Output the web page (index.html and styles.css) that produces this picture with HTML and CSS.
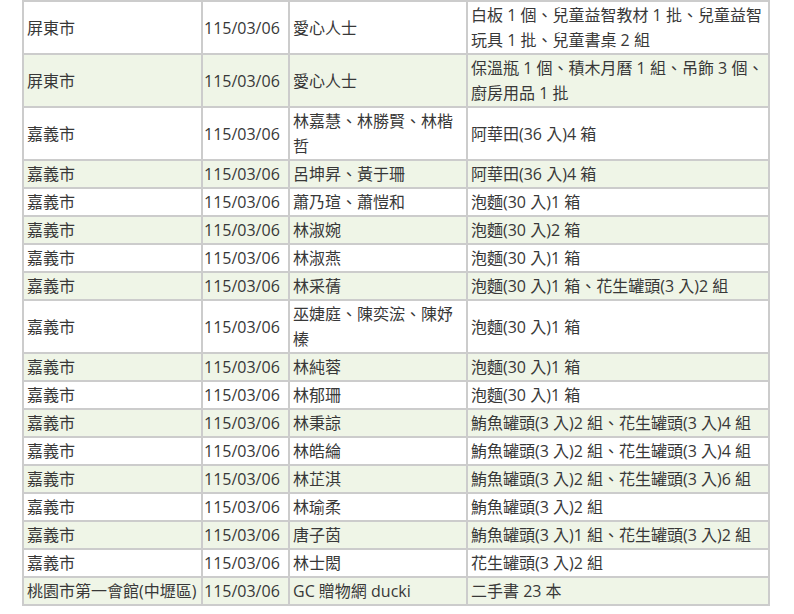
FILE: index.html
```html
<!DOCTYPE html>
<html lang="zh-Hant">
<head>
<meta charset="utf-8">
<title>捐贈明細</title>
<link rel="stylesheet" href="styles.css">
</head>
<body>
<table class="donations">
  <colgroup>
    <col class="c-area">
    <col class="c-date">
    <col class="c-donor">
    <col class="c-items">
  </colgroup>
  <tbody>
    <tr><td>屏東市</td><td>115/03/06</td><td>愛心人士</td><td>白板 1 個、兒童益智教材 1 批、兒童益智玩具 1 批、兒童書桌 2 組</td></tr>
    <tr><td>屏東市</td><td>115/03/06</td><td>愛心人士</td><td>保溫瓶 1 個、積木月曆 1 組、吊飾 3 個、廚房用品 1 批</td></tr>
    <tr><td>嘉義市</td><td>115/03/06</td><td class="names">林嘉慧、林勝賢、林楷哲</td><td>阿華田(36 入)4 箱</td></tr>
    <tr><td>嘉義市</td><td>115/03/06</td><td>呂坤昇、黃于珊</td><td>阿華田(36 入)4 箱</td></tr>
    <tr><td>嘉義市</td><td>115/03/06</td><td>蕭乃瑄、蕭愷和</td><td>泡麵(30 入)1 箱</td></tr>
    <tr><td>嘉義市</td><td>115/03/06</td><td>林淑婉</td><td>泡麵(30 入)2 箱</td></tr>
    <tr><td>嘉義市</td><td>115/03/06</td><td>林淑燕</td><td>泡麵(30 入)1 箱</td></tr>
    <tr><td>嘉義市</td><td>115/03/06</td><td>林采蒨</td><td>泡麵(30 入)1 箱、花生罐頭(3 入)2 組</td></tr>
    <tr><td>嘉義市</td><td>115/03/06</td><td class="names">巫婕庭、陳奕浤、陳妤榛</td><td>泡麵(30 入)1 箱</td></tr>
    <tr><td>嘉義市</td><td>115/03/06</td><td>林純蓉</td><td>泡麵(30 入)1 箱</td></tr>
    <tr><td>嘉義市</td><td>115/03/06</td><td>林郁珊</td><td>泡麵(30 入)1 箱</td></tr>
    <tr><td>嘉義市</td><td>115/03/06</td><td>林秉諒</td><td>鮪魚罐頭(3 入)2 組、花生罐頭(3 入)4 組</td></tr>
    <tr><td>嘉義市</td><td>115/03/06</td><td>林皓綸</td><td>鮪魚罐頭(3 入)2 組、花生罐頭(3 入)4 組</td></tr>
    <tr><td>嘉義市</td><td>115/03/06</td><td>林芷淇</td><td>鮪魚罐頭(3 入)2 組、花生罐頭(3 入)6 組</td></tr>
    <tr><td>嘉義市</td><td>115/03/06</td><td>林瑜柔</td><td>鮪魚罐頭(3 入)2 組</td></tr>
    <tr><td>嘉義市</td><td>115/03/06</td><td>唐子茵</td><td>鮪魚罐頭(3 入)1 組、花生罐頭(3 入)2 組</td></tr>
    <tr><td>嘉義市</td><td>115/03/06</td><td>林士閎</td><td>花生罐頭(3 入)2 組</td></tr>
    <tr><td>桃園市第一會館(中壢區)</td><td>115/03/06</td><td>GC 贈物網 ducki</td><td>二手書 23 本</td></tr>
  </tbody>
</table>
</body>
</html>
```

FILE: styles.css
```css
html, body {
  margin: 0;
  padding: 0;
  background: #ffffff;
}

body {
  font-family: "Open Sans", "Noto Sans CJK TC", sans-serif;
  font-size: 16px;
  color: #383838;
}

.donations {
  margin: 0 0 0 22px;
  width: 748px;
  table-layout: fixed;
  border-collapse: collapse;
}

.c-area { width: 179px; }
.c-date { width: 87px; }
.c-donor { width: 178px; }
.c-items { width: 302px; }

.donations td {
  border: 2px solid #cccccc;
  padding: 1px 3px 0 3px;
  line-height: 25px;
  vertical-align: middle;
  text-align: left;
  word-break: break-all;
}

.donations td:nth-child(2) {
  padding-left: 1px;
  padding-right: 1px;
  white-space: nowrap;
}

.donations tr:nth-child(even) td {
  background: #eff5e7;
}
```
